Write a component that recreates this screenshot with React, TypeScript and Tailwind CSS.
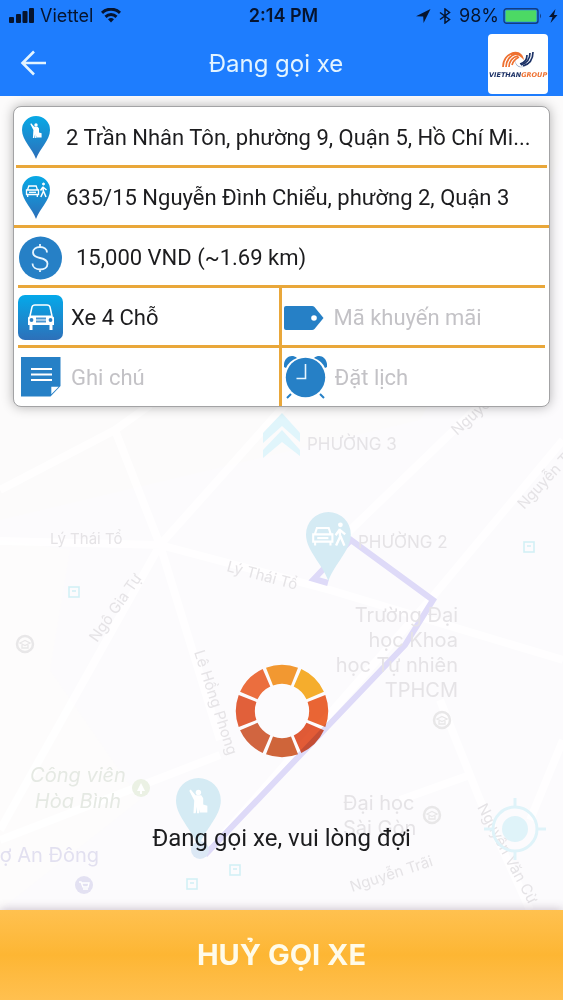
import type { ReactNode } from "react";

function StatusBar() {
  return (
    <div className="grid h-8 grid-cols-3 items-center pr-1 pl-2 text-lg text-[#06142e]">
      <div className="flex items-center gap-2">
        <svg className="h-4 w-7 shrink-0" viewBox="0 0 28 16" fill="currentColor" aria-hidden="true">
          <rect x="1" y="9" width="5" height="6" rx="1" />
          <rect x="8" y="6" width="5" height="9" rx="1" />
          <rect x="14.500" y="3" width="5" height="12" rx="1" />
          <rect x="21" y="0" width="5" height="15" rx="1" />
        </svg>
        <span className="-ml-1">Viettel</span>
        <svg className="h-4 w-5 shrink-0" viewBox="0 0 20 16" fill="none" stroke="currentColor" strokeWidth="3" aria-hidden="true">
          <path d="M1 4.800a13 13 0 0 1 18 0" />
          <path d="M4.500 8.800a8 8 0 0 1 11 0" />
          <path d="M10 14.500l-3-3.200a4.500 4.500 0 0 1 6 0z" fill="currentColor" stroke="none" />
        </svg>
      </div>
      <div className="text-center text-lg font-semibold">2:14 PM</div>
      <div className="flex items-center justify-end gap-1">
        <svg className="mr-1 size-4 shrink-0" viewBox="0 0 16 16" fill="currentColor" aria-hidden="true">
          <path d="M15.500 1L1 8.200l7.200.2.400 6.600z" />
        </svg>
        <svg className="mr-1 h-4 w-3 shrink-0" viewBox="0 0 12 16" fill="none" stroke="currentColor" strokeWidth="1.500" aria-hidden="true">
          <path d="M1 4.500l9.500 7L6 15V1l4.500 3.500-9.500 7" />
        </svg>
        <span>98%</span>
        <svg className="h-4 w-10 shrink-0" viewBox="0 0 40 16" aria-hidden="true">
          <rect x="1" y=".7" width="34" height="14.600" rx="2.500" fill="none" stroke="#123d80" strokeWidth="1.400" />
          <rect x="2.500" y="2.200" width="31" height="11.600" rx="1" fill="#4cd964" />
          <path d="M37 5.500q2 2.500 0 5z" fill="#123d80" />
        </svg>
        <svg className="h-4 w-3 shrink-0" viewBox="0 0 12 16" fill="currentColor" aria-hidden="true">
          <path d="M8.500 1L2 9h3.500L3.500 15 10.500 7H7z" />
        </svg>
      </div>
    </div>
  );
}

function Logo() {
  return (
    <svg className="size-[60px] rounded bg-white" viewBox="0 0 60 60" role="img" aria-label="VIETHANGROUP">
      <g fill="none" stroke="#ee7030" strokeWidth="1.700">
        <path d="M15 33c0-7 4-13 11-14" />
        <path d="M18 33c0-6 4-12 10-13" />
        <path d="M21 33c0-5 3-10 9-11" />
        <path d="M24 31c1-4 3-6 7-8" />
      </g>
      <path d="M23 19c6-3 12 0 13 7-4-5-8-6-13-5z" fill="#ee7030" />
      <g fill="none" stroke="#1d3266" strokeWidth="1.700">
        <path d="M45 18c0 7-3 12-10 14" />
        <path d="M42 19c0 6-3 10-9 12" />
        <path d="M39 21c0 5-3 8-7 9" />
      </g>
      <path d="M27 26c1 6 5 8 11 6-5 3-11 1-11-6z" fill="#8fa0c0" />
      <text x="1" y="43" fontFamily="DejaVu Sans" fontSize="6.500" fontWeight="700" fontStyle="italic" fill="#1d3266">
        VIETHAN<tspan fill="#ee7030">GROUP</tspan>
      </text>
    </svg>
  );
}

function Traveller() {
  return (
    <g fill="#fff">
      <circle cx="14" cy="9" r="1.700" />
      <path d="M8.300 8l.9-.8 3 3.600h3.600l1.200 1.800v3.900l2.600.8v4.200h-4.600v-2l-.6 2.500h-1.300v-4l-.8 4h-1.400l.5-8z" />
    </g>
  );
}

function CarAndWalker() {
  return (
    <g fill="none" stroke="#fff">
      <path d="M5.500 14l1.300-4h7.400l1.300 4M4.500 14h12v4.500h-12zM5.700 18.500v2.500M15.300 18.500v2.500" strokeWidth="1.300" />
      <path d="M7 16.300h7" strokeWidth="1.300" />
      <circle cx="21.500" cy="8" r="1" fill="#fff" />
      <path d="M21 10.500l.3 5-2.500 5.500M21.500 15l2.500 6M21 11l-2.500 3.500M21.500 11.500l3 2.500" strokeWidth="1.500" />
    </g>
  );
}

const PIN = "M14 43C10 32 0 24 0 14A14 14 0 0 1 28 14C28 24 18 32 14 43z";

function Pin({ children, id }: { children: ReactNode; id: string }) {
  return (
    <svg className="h-[43px] w-7 shrink-0" viewBox="0 0 28 43" aria-hidden="true">
      <defs>
        <linearGradient id={id} x1="0" y1="0" x2="0" y2="1">
          <stop offset="0" stopColor="#08a9e6" />
          <stop offset="1" stopColor="#2d6fb9" />
        </linearGradient>
      </defs>
      <path d={PIN} fill={`url(#${id})`} />
      {children}
    </svg>
  );
}

function DollarIcon() {
  return (
    <svg className="size-11 shrink-0" viewBox="0 0 44 44" aria-hidden="true">
      <circle cx="22.500" cy="22" r="21.500" fill="#2680c6" />
      <path d="M29 16.500c0-3.500-3-5.500-7-5.500s-7 2-7 5.500 3 4.700 7 5.500 7.500 2 7.500 5.700-3.300 5.800-7.500 5.800-7.500-2.300-7.500-6M22 8v3M22 33.500v2.500" fill="none" stroke="#e8f6ff" strokeWidth="1.800" />
    </svg>
  );
}

function CarIcon() {
  return (
    <svg className="size-[45px] shrink-0" viewBox="0 0 45 45" aria-hidden="true">
      <defs>
        <linearGradient id="tile" x1="0" y1="0" x2="0" y2="1">
          <stop offset="0" stopColor="#04a9ea" />
          <stop offset="1" stopColor="#2d70b9" />
        </linearGradient>
      </defs>
      <rect width="45" height="45" rx="7" fill="url(#tile)" />
      <path d="M12 21l2-9Q14.500 10 17 10h12q2.500 0 3 2l2 9" fill="none" stroke="#fff" strokeWidth="1.500" />
      <path d="M12 20.500h22l2 2V30h-1.500v5h-3v-5h-17v5h-3v-5H10v-7.500z" fill="#fff" />
      <circle cx="13.500" cy="25" r="1.900" fill="#2b80c6" />
      <circle cx="32.500" cy="25" r="1.900" fill="#2b80c6" />
      <path d="M18 23.500h10M18 26.500h10" stroke="#4a96d2" strokeWidth="1.800" />
    </svg>
  );
}

function NoteIcon() {
  return (
    <svg className="size-10 shrink-0" viewBox="0 0 40 40" aria-hidden="true">
      <path d="M0 0h39.500v29L29.500 39.500H0z" fill="#2680c6" />
      <path d="M30.300 29.700h7.400l-7.400 7.600z" fill="#fff" />
      <path d="M10 12h21M10 17.500h21M10 23h21" stroke="#fff" strokeWidth="1.800" />
    </svg>
  );
}

function TagIcon() {
  return (
    <svg className="h-6 w-10 shrink-0" viewBox="0 0 40 24" aria-hidden="true">
      <path d="M2 0h26q1.500 0 2.500 1L39.500 12 30.500 23q-1 1-2.500 1H2q-2 0-2-2V2q0-2 2-2z" fill="#2680c6" />
      <circle cx="30" cy="12" r="2.800" fill="#fff" />
    </svg>
  );
}

function ClockIcon() {
  return (
    <svg className="h-11 w-[43px] shrink-0" viewBox="0 0 43 44" aria-hidden="true">
      <circle cx="21.500" cy="22.500" r="19.700" fill="#2680c6" />
      <path d="M0 12C-1 3 7-2 13 3Q5 6 2 13zM43 12c1-9-7-14-13-9q8 3 11 10z" fill="#2680c6" />
      <path d="M7 39l-4 4M36 39l4 4" stroke="#2680c6" strokeWidth="2" />
      <path d="M21.500 9v14.500H12.500" fill="none" stroke="#e8f6ff" strokeWidth="1.600" />
    </svg>
  );
}

const SEGMENTS = ["#f59b31", "#f8b02d", "#ec6734", "#e25b36", "#d2663a", "#d46640", "#e4613a", "#ee703e"];

function Spinner() {
  return (
    <svg className="size-24 mix-blend-multiply" viewBox="-48 -49 96 96" role="status" aria-label="Đang gọi xe">
      {SEGMENTS.map((color, i) => (
        <path
          key={color}
          d="M-16 -43.300A46.200 46.200 0 0 1 16 -43.300L9 -25.600A27.200 27.200 0 0 0 -9 -25.600z"
          fill={color}
          transform={`rotate(${i * 45})`}
        />
      ))}
    </svg>
  );
}

function School({ x, y }: { x: number; y: number }) {
  return (
    <g transform={`translate(${x} ${y})`} fill="none" stroke="#e8e7e8" strokeWidth="2.500">
      <circle r="8" />
      <path d="M-5 -1l5-2.500 5 2.500-5 2.500zM-3 1v3h6V1" strokeWidth="1.300" />
    </g>
  );
}

function BusStop({ x, y }: { x: number; y: number }) {
  return (
    <g transform={`translate(${x} ${y})`} fill="none" stroke="#d3f0f5" strokeWidth="1.600">
      <rect x="-5" y="-5" width="10" height="10" />
      <path d="M-2 -1h4" />
    </g>
  );
}

function MapBackdrop() {
  return (
    <svg
      className="absolute inset-0 h-full w-full bg-[#fcfbfd]"
      viewBox="0 96 563 814"
      preserveAspectRatio="xMidYMid slice"
      aria-hidden="true"
    >
      <path d="M0 96h563v60L420 420 0 520z" fill="#fcfbfb" />
      <path d="M0 540l70 10-20 120 90 130L0 910z" fill="#fdfcfc" />
      <g fill="none" stroke="#fff" strokeWidth="8" opacity="0.8">
        <path d="M0 490L115 430 150 405M115 430L160 545M0 541L160 545 285 405M160 545L330 590 563 660M160 545L0 830M160 545L220 740M563 440L430 600 210 850M340 540L480 405M440 700L480 800 530 910M0 840L220 755M400 800L470 775M563 740L530 820" />
      </g>
      <path d="M205 855L405 645 433 600 351 540 314 579 328 583" fill="none" stroke="#dedaf8" strokeWidth="6" />
      <path d="M263 433l19-20 18 20v9l-18-16-19 17zM263 450l19-20 18 20v6l-18-14-19 16z" fill="#e0f5fb" />
      <g fill="#e5e3e6" fontFamily="Inter, Roboto, sans-serif">
        <g fontSize="17">
          <text x="307" y="450">PHƯỜNG 3</text>
          <text x="358" y="548">PHƯỜNG 2</text>
        </g>
        <g fontSize="15">
          <text x="50" y="544">Lý Thái Tổ</text>
          <text transform="translate(226 571) rotate(15)">Lý Thái Tổ</text>
          <text transform="translate(97 643) rotate(-55)">Ngô Gia Tự</text>
          <text transform="translate(194 652) rotate(72)">Lê Hồng Phong</text>
          <text transform="translate(457 436) rotate(-42)">Nguyễn</text>
          <text transform="translate(524 510) rotate(-47)">Nguyễn Thị</text>
          <text transform="translate(352 892) rotate(-18)">Nguyễn Trãi</text>
          <text transform="translate(477 807) rotate(62)">Nguyễn Văn Cừ</text>
        </g>
        <g fontSize="20" textAnchor="end">
          <text x="458" y="622">Trường Đại</text>
          <text x="458" y="647">học Khoa</text>
          <text x="458" y="672">học Tự nhiên</text>
          <text x="458" y="697">TPHCM</text>
        </g>
        <g fontSize="20">
          <text x="343" y="810">Đại học</text>
          <text x="343" y="835">Sài Gòn</text>
        </g>
        <g fontSize="20" fontStyle="italic" fill="#e5e9e3" textAnchor="middle">
          <text x="78" y="782">Công viên</text>
          <text x="78" y="808">Hòa Bình</text>
        </g>
        <text x="99" y="862" fontSize="20" fill="#e2e0f0" textAnchor="end">Chợ An Đông</text>
      </g>
      <School x={25} y={644} />
      <School x={442} y={720} />
      <School x={432} y={815} />
      <g transform="translate(141 788)">
        <circle r="9" fill="#ebf1e4" />
        <path d="M0 -5l4 8h-3v3h-2v-3h-3z" fill="#fff" />
      </g>
      <g transform="translate(84 885)">
        <circle r="9" fill="#e3e1f2" />
        <path d="M-5 -3h2l2 5h5l1-4h-7M-1 4h5" fill="none" stroke="#fff" strokeWidth="1.400" />
      </g>
      <BusStop x={74} y={592} />
      <BusStop x={529} y={547} />
      <BusStop x={192} y={884} />
      <BusStop x={235} y={870} />
      <circle cx="200" cy="850" r="9" fill="#dce8f5" />
      <g transform="translate(306 512) scale(1.600)">
        <path d={PIN} fill="#d5ebf4" />
        <CarAndWalker />
      </g>
      <g transform="translate(176 778) scale(1.600)">
        <path d={PIN} fill="#d5ebf4" />
        <Traveller />
      </g>
      <g transform="translate(515 829)" stroke="#dff3f9" strokeWidth="3">
        <circle r="22" fill="none" />
        <circle r="11.500" fill="#dff3f9" />
        <path d="M0 -31v9M0 22v9M-31 0h9M22 0h9" />
      </g>
    </svg>
  );
}

function Divider({ inset }: { inset: string }) {
  return <div className={`h-[3px] bg-[#e9a73a] ${inset}`} />;
}

const FIELD = "w-full min-w-0 flex-1 bg-transparent outline-none placeholder:text-[#c3c2c6]";

export default function App() {
  return (
    <div className="flex min-h-screen flex-col bg-[#fcfbfd] font-[Inter,Roboto,sans-serif] text-[#1c1c1e]">
      <header className="bg-[#1e7dfe]">
        <StatusBar />
        <div className="grid h-16 grid-cols-[44px_1fr_60px] items-center pr-[15px] pl-5 text-[#e3f4ff]">
          <button type="button" aria-label="Quay lại" className="w-7">
            <svg className="size-7" viewBox="0 0 28 28" fill="none" stroke="currentColor" strokeWidth="2.600" aria-hidden="true">
              <path d="M26 13H2.500M14 1.500L2.500 13 14 24.500" />
            </svg>
          </button>
          <h1 className="text-center text-2xl">Đang gọi xe</h1>
          <Logo />
        </div>
      </header>

      <main className="relative flex flex-1 flex-col">
        <MapBackdrop />

        <section className="relative mx-[13px] mt-2.5 rounded-lg border border-[#a3a3a5] bg-white font-[Roboto,sans-serif] text-[22px] shadow-[0_0_12px_rgba(0,0,0,0.3)]">
          <div className="flex h-[58px] items-center gap-4 px-2 pt-0.5">
            <Pin id="pickup">
              <Traveller />
            </Pin>
            <p className="truncate">2 Trần Nhân Tôn, phường 9, Quận 5, Hồ Chí Mi...</p>
          </div>
          <Divider inset="mx-0.5" />
          <div className="flex h-[57px] items-center gap-4 px-2 pt-0.5">
            <Pin id="dropoff">
              <CarAndWalker />
            </Pin>
            <p className="truncate">635/15 Nguyễn Đình Chiểu, phường 2, Quận 3</p>
          </div>
          <Divider inset="mx-0" />
          <div className="flex h-[57px] items-center gap-3.5 px-1 pt-0.5">
            <DollarIcon />
            <p className="truncate">15,000 VND (~1.69 km)</p>
          </div>
          <Divider inset="mx-1" />
          <div className="grid h-[57px] grid-cols-2">
            <button type="button" className="flex items-center gap-2 border-r-[3px] border-[#e9a73a] pt-0.5 pl-1 text-left">
              <CarIcon />
              <span>Xe 4 Chỗ</span>
            </button>
            <label className="flex items-center gap-2.5 pt-0.5 pr-2 pl-0.5">
              <TagIcon />
              <input type="text" aria-label="Mã khuyến mãi" placeholder="Mã khuyến mãi" className={FIELD} />
            </label>
          </div>
          <Divider inset="mx-1" />
          <div className="grid h-[58px] grid-cols-2">
            <label className="flex items-center gap-2.5 border-r-[3px] border-[#e9a73a] pr-2 pl-[7px]">
              <NoteIcon />
              <input type="text" aria-label="Ghi chú" placeholder="Ghi chú" className={FIELD} />
            </label>
            <label className="flex items-center gap-2 pr-2 pl-0.5">
              <ClockIcon />
              <input type="text" aria-label="Đặt lịch" placeholder="Đặt lịch" className={FIELD} />
            </label>
          </div>
        </section>

        <div className="relative flex flex-1 flex-col items-center justify-end gap-16 pb-14 mix-blend-multiply">
          <Spinner />
          <p className="font-[Roboto,sans-serif] text-2xl leading-8">Đang gọi xe, vui lòng đợi</p>
        </div>
      </main>

      <button
        type="button"
        className="relative h-[90px] w-full bg-linear-to-b from-[#ffc14f] via-[#fdb633] to-[#ffc04f] text-[29px] font-bold text-[#fffbe9] shadow-[0_0_10px_rgba(60,30,60,0.3)]"
      >
        HUỶ GỌI XE
      </button>
    </div>
  );
}
